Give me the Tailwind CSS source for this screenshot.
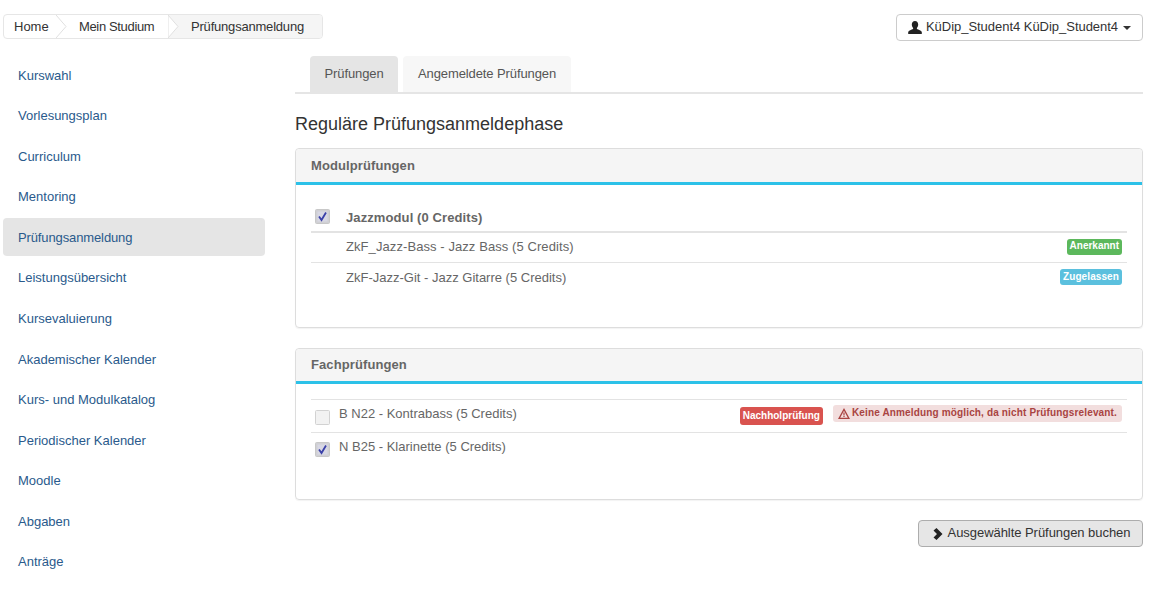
<!DOCTYPE html>
<html lang="de">
<head>
  <meta charset="UTF-8" />
  <title>Prüfungsanmeldung</title>
  <script src="https://cdn.jsdelivr.net/npm/@tailwindcss/browser@4"></script>
</head>
<body class="bg-white font-['Liberation_Sans',Arial,sans-serif] text-[13px] leading-[18.57px] text-[#333]">
  <div class="h-[595px] w-[1171px] overflow-hidden">
    <!-- top bar -->
    <div class="flex items-start justify-between pl-[3px] pr-[28px] pt-[14px]">
      <div class="flex h-[25px] w-[320px] overflow-hidden rounded-[4px] border border-[#e6e6e6] text-[#333]">
        <a class="flex w-[52px] items-center pl-[10px] pt-[1px]">Home</a>
        <svg class="h-[23px] w-[11px] shrink-0" viewBox="0 0 11 23"><path d="M0 0 L10 11.5 L0 23" fill="none" stroke="#e0e0e0" /></svg>
        <a class="flex w-[101px] items-center pl-[12px] pt-[1px] tracking-[-0.35px]">Mein Studium</a>
        <div class="relative flex flex-1 items-center bg-[#f5f5f5] pl-[23px] pt-[1px] tracking-[-0.2px]">
          <svg class="absolute left-0 top-0 h-[23px] w-[11px]" viewBox="0 0 11 23"><path d="M0 0 L10 11.5 L0 23 Z" fill="#fff" stroke="#e0e0e0" /></svg>
          <span>Prüfungsanmeldung</span>
        </div>
      </div>
      <button class="flex h-[27px] w-[247px] items-center justify-center rounded-[4px] border border-[#ccc] bg-white text-[#333]">
        <svg class="mr-[4px] h-[13px] w-[14px]" viewBox="0 0 14 13"><path d="M7 0c2 0 3.200 1.500 3.200 3.600 0 1.500-.6 2.700-1.300 3.400v1.100c1.500.6 4.600 1.500 4.900 3V13H.2v-1.900c.3-1.500 3.400-2.400 4.900-3V7C4.400 6.300 3.800 5.100 3.800 3.600 3.800 1.500 5 0 7 0z" fill="#222" /></svg>
        <span class="tracking-[-0.03px]">KüDip_Student4 KüDip_Student4</span>
        <span class="ml-[5px] h-0 w-0 border-x-[4px] border-t-[4px] border-x-transparent border-t-[#333]"></span>
      </button>
    </div>

    <div class="flex pl-[3px] pr-[28px]">
      <!-- sidebar -->
      <nav class="mt-[15px] flex w-[262px] shrink-0 flex-col gap-[2.55px] text-[#2a5a8c]">
        <a class="flex h-[38px] items-center px-[15px] pt-[2px]">Kurswahl</a>
        <a class="flex h-[38px] items-center px-[15px] pt-[2px]">Vorlesungsplan</a>
        <a class="flex h-[38px] items-center px-[15px] pt-[2px]">Curriculum</a>
        <a class="flex h-[38px] items-center px-[15px] pt-[2px]">Mentoring</a>
        <a class="flex h-[38px] items-center rounded-[4px] bg-[#e5e5e5] px-[15px] pt-[2px] tracking-[-0.12px]">Prüfungsanmeldung</a>
        <a class="flex h-[38px] items-center px-[15px] pt-[2px]">Leistungsübersicht</a>
        <a class="flex h-[38px] items-center px-[15px] pt-[2px]">Kursevaluierung</a>
        <a class="flex h-[38px] items-center px-[15px] pt-[2px]">Akademischer Kalender</a>
        <a class="flex h-[38px] items-center px-[15px] pt-[2px]">Kurs- und Modulkatalog</a>
        <a class="flex h-[38px] items-center px-[15px] pt-[2px]">Periodischer Kalender</a>
        <a class="flex h-[38px] items-center px-[15px] pt-[2px]">Moodle</a>
        <a class="flex h-[38px] items-center px-[15px] pt-[2px]">Abgaben</a>
        <a class="flex h-[38px] items-center px-[15px] pt-[2px]">Anträge</a>
      </nav>

      <!-- main -->
      <main class="ml-[30px] w-[848px] pt-[15px]">
        <div class="flex h-[38px] gap-[5px] border-b-2 border-[#e5e5e5] pl-[15px]">
          <a class="flex h-[36px] w-[88px] items-center justify-center rounded-t-[4px] bg-[#e5e5e5] text-[#555] tracking-[-0.1px]">Prüfungen</a>
          <a class="flex h-[36px] w-[168px] items-center justify-center rounded-t-[4px] bg-[#f7f7f7] text-[#555] tracking-[-0.1px]">Angemeldete Prüfungen</a>
        </div>

        <h3 class="mt-[19px] h-[22px] text-[18px] leading-[22px] text-[#333]">Reguläre Prüfungsanmeldephase</h3>

        <!-- Modulprüfungen -->
        <section class="mt-[13px] h-[180px] rounded-[4px] border border-[#ddd] shadow-[0_1px_1px_rgba(0,0,0,0.05)]">
          <div class="flex h-[36px] items-center rounded-t-[4px] border-b-[3px] border-[#2cc1e8] bg-[#f5f5f5] px-[15px] pt-[2px] font-bold tracking-[0.1px] text-[#666]">Modulprüfungen</div>
          <div class="px-[15px] pt-[20px] text-[#666]">
            <div class="flex h-[28px] items-center border-b-2 border-[#e3e3e3] font-bold tracking-[0.1px]">
              <svg class="mb-[3px] ml-[4px] h-[15px] w-[15px]" viewBox="0 0 15 15"><rect x=".5" y=".5" width="14" height="14" rx="1" fill="#d0d0d4" stroke="#c8c8c8" /><rect x="2.500" y="2.500" width="10" height="10" fill="#d8d8e4" /><path d="M4 7.500 L6.500 11 L11 3.500" fill="none" stroke="#3a40a8" stroke-width="1.800" /></svg>
              <span class="ml-[16px]">Jazzmodul (0 Credits)</span>
            </div>
            <div class="flex h-[30px] items-center justify-between border-b border-[#e3e3e3] pl-[35px] pr-[5px]">
              <span class="tracking-[0.08px]">ZkF_Jazz-Bass - Jazz Bass (5 Credits)</span>
              <span class="mb-[2px] flex h-[16px] items-center rounded-[3px] bg-[#5cb85c] px-[3px] text-[10px] font-bold text-white">Anerkannt</span>
            </div>
            <div class="flex h-[30px] items-center justify-between pl-[35px] pr-[5px]">
              <span>ZkF-Jazz-Git - Jazz Gitarre (5 Credits)</span>
              <span class="mb-[2px] flex h-[16px] items-center rounded-[3px] bg-[#5bc0de] px-[3px] text-[10px] font-bold tracking-[0.1px] text-white">Zugelassen</span>
            </div>
          </div>
        </section>

        <!-- Fachprüfungen -->
        <section class="mt-[20px] h-[152px] rounded-[4px] border border-[#ddd] shadow-[0_1px_1px_rgba(0,0,0,0.05)]">
          <div class="flex h-[35px] items-center rounded-t-[4px] border-b-[3px] border-[#2cc1e8] bg-[#f5f5f5] px-[15px] font-bold tracking-[0.1px] text-[#666]">Fachprüfungen</div>
          <div class="px-[15px] pt-[15px] text-[#666]">
            <div class="relative flex h-[34px] items-center border-y border-[#e3e3e3] pr-[5px]">
              <svg class="ml-[4px] mt-[3px] h-[15px] w-[15px]" viewBox="0 0 15 15"><rect x=".5" y=".5" width="14" height="14" rx="1" fill="#f2f2f2" stroke="#d2d2d2" /></svg>
              <span class="ml-[9px] mb-[3px]">B N22 - Kontrabass (5 Credits)</span>
              <span class="ml-auto flex h-[18px] items-center rounded-[3px] bg-[#d9534f] px-[3px] text-[10px] font-bold text-white">Nachholprüfung</span>
              <span class="ml-[10px] mb-[5px] flex h-[17px] items-center rounded-[3px] bg-[#f2dede] px-[5px] text-[10px] font-bold tracking-[0.15px] text-[#a94442]">
                <svg class="mr-[2px] h-[11px] w-[12px]" viewBox="0 0 12 11"><path fill-rule="evenodd" d="M6 0 L12 11 H0 Z M6 2.800 L2.200 9.700 H9.800 Z M5.400 4.500 H6.600 V7.500 H5.400 Z M5.400 8 H6.600 V9 H5.400 Z" fill="#a94442" /></svg>
                Keine Anmeldung möglich, da nicht Prüfungsrelevant.
              </span>
            </div>
            <div class="flex h-[32px] items-center">
              <svg class="ml-[4px] h-[15px] w-[15px]" viewBox="0 0 15 15"><rect x=".5" y=".5" width="14" height="14" rx="1" fill="#d0d0d4" stroke="#c8c8c8" /><rect x="2.500" y="2.500" width="10" height="10" fill="#d8d8e4" /><path d="M4 7.500 L6.500 11 L11 3.500" fill="none" stroke="#3a40a8" stroke-width="1.800" /></svg>
              <span class="ml-[9px] mb-[3px]">N B25 - Klarinette (5 Credits)</span>
            </div>
          </div>
        </section>

        <div class="mt-[20px] flex justify-end">
          <button class="flex h-[27px] w-[225px] items-center justify-center rounded-[4px] border border-[#adadad] bg-[#e6e6e6] pl-[2px] text-[#333]">
            <svg class="mr-[5px] h-[12px] w-[10px]" viewBox="0 0 10 12"><path d="M3.500 0 L9.500 6 L3.500 12 L0.500 9.500 L4 6 L0.500 2.500 Z" fill="#222" /></svg>
            <span class="tracking-[-0.05px]">Ausgewählte Prüfungen buchen</span>
          </button>
        </div>
      </main>
    </div>
  </div>
</body>
</html>
